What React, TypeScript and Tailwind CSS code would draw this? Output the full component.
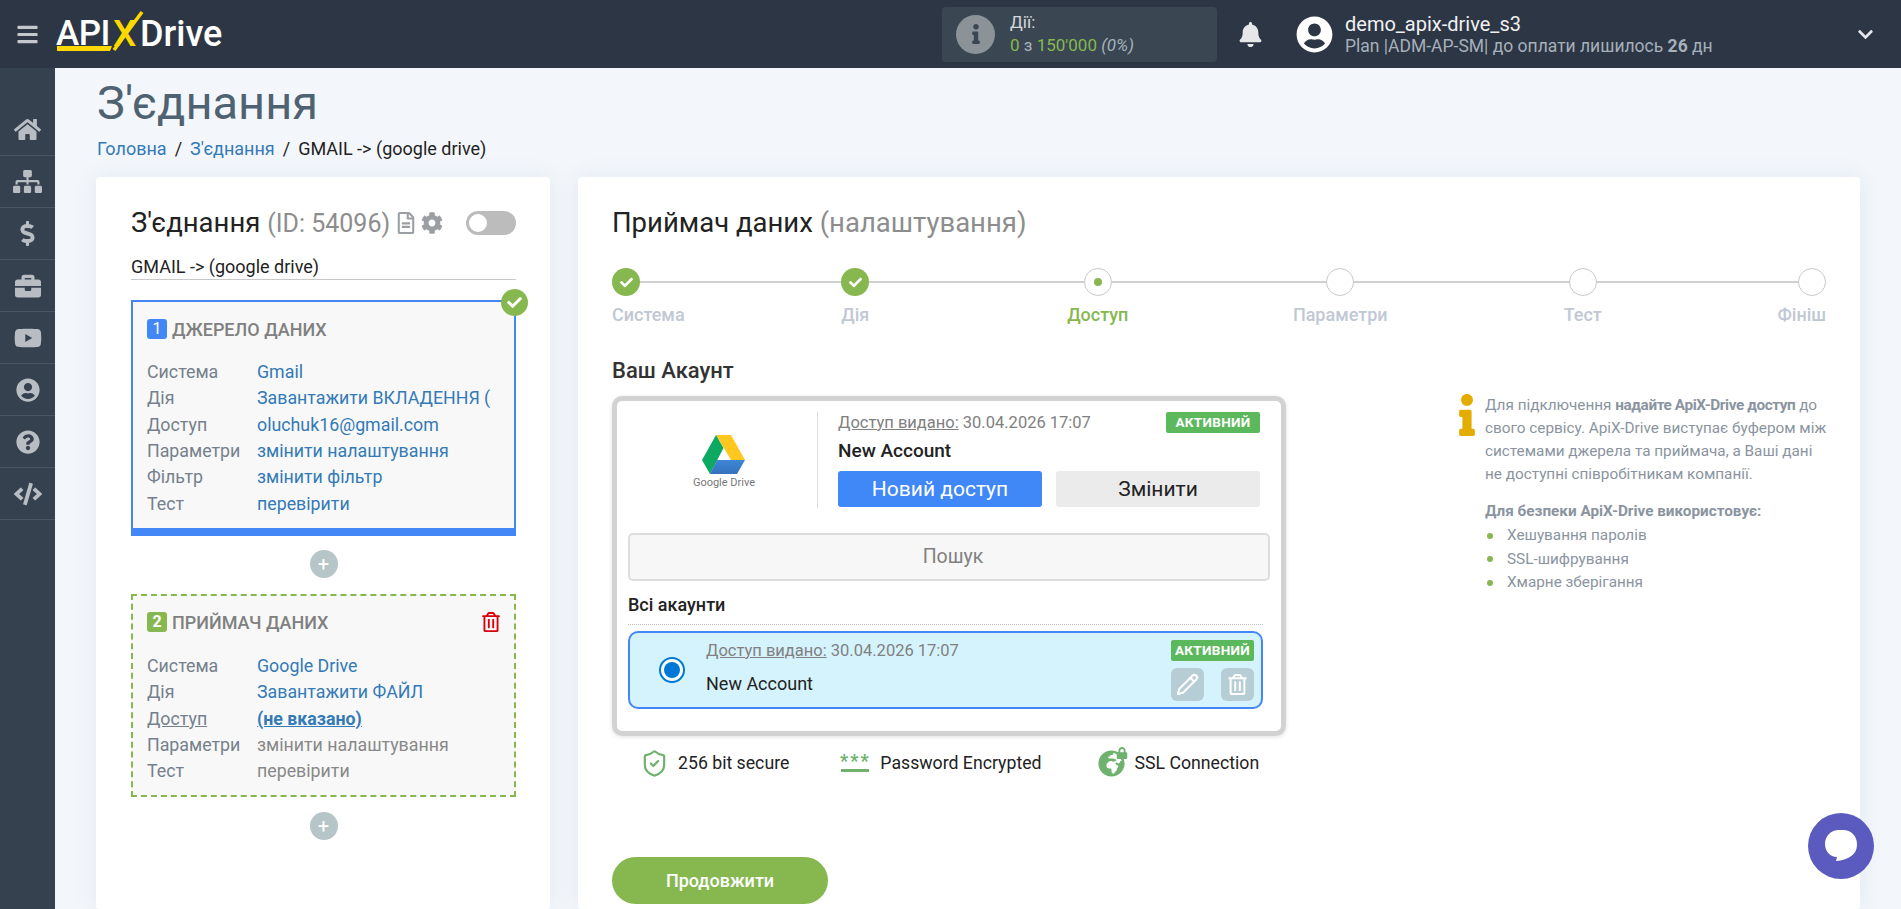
import { Pencil, ShieldCheck } from 'lucide-react';
import {
  FaBars, FaBell, FaBriefcase, FaCheck, FaChevronDown, FaCode, FaCog, FaDollarSign, FaGlobeAfrica, FaHome,
  FaInfo, FaLock, FaQuestionCircle, FaRegFileAlt, FaRegTrashAlt, FaSitemap, FaUserCircle, FaYoutube,
} from 'react-icons/fa';

const sideIcons = [
  { Icon: FaHome, size: 27 },
  { Icon: FaSitemap, size: 29 },
  { Icon: FaDollarSign, size: 25 },
  { Icon: FaBriefcase, size: 26 },
  { Icon: FaYoutube, size: 28 },
  { Icon: FaUserCircle, size: 24 },
  { Icon: FaQuestionCircle, size: 24 },
  { Icon: FaCode, size: 28 },
];

const steps = [
  { label: 'Система', state: 'done', align: 'items-start' },
  { label: 'Дія', state: 'done', align: 'items-center' },
  { label: 'Доступ', state: 'current', align: 'items-center' },
  { label: 'Параметри', state: 'todo', align: 'items-center' },
  { label: 'Тест', state: 'todo', align: 'items-center' },
  { label: 'Фініш', state: 'todo', align: 'items-end' },
];

function Logo() {
  return (
    <div className="relative ml-[20px] w-[170px] h-[68px] text-white">
      <span className="absolute left-0 top-[15px] text-[35px] leading-[38px] font-medium tracking-[-0.5px]">API</span>
      <span className="absolute left-[57px] top-[15px] text-[37px] leading-[38px] font-medium text-[#ffd800]">X</span>
      <span className="absolute left-[84px] top-[15px] text-[36px] leading-[38px] font-medium">Drive</span>
      <svg className="absolute left-0 top-0" width="100" height="68" viewBox="0 0 100 68">
        <path d="M1 46h55l-2 5H1z" fill="#ffd800" />
        <path d="M86 12 58 50" stroke="#ffd800" strokeWidth="3.5" fill="none" />
      </svg>
    </div>
  );
}

function Header() {
  return (
    <header className="h-[68px] shrink-0 bg-[#2d3644] flex items-center text-white">
      <div className="w-[36px] pl-[16px] shrink-0">
        <FaBars className="text-[#c4c7cb]" size={23} />
      </div>
      <Logo />
      <div className="ml-[716px] w-[275px] h-[55px] rounded-[4px] bg-[#3a4753] flex items-center pl-[14px]">
        <div className="w-[39px] h-[39px] rounded-full bg-[#8b9298] flex items-center justify-center">
          <FaInfo className="text-[#3a4753]" size={20} />
        </div>
        <div className="ml-[15px] pb-[2px]">
          <div className="text-[17px] leading-[20px] text-[#d5d8db]">Дії:</div>
          <div className="mt-[3px] text-[17px] leading-[20px] text-[#86b84f]">
            0 <span className="text-[#a6b0bb]">з</span> 150'000 <span className="italic text-[#a6b0bb]">(0%)</span>
          </div>
        </div>
      </div>
      <FaBell className="ml-[21px] text-[#e5e7e9]" size={25} />
      <FaUserCircle className="ml-[33px] text-white" size={37} />
      <div className="ml-[12px]">
        <div className="text-[20px] leading-[22px] text-[#f0f1f2]">demo_apix-drive_s3</div>
        <div className="mt-[1px] text-[17.5px] leading-[20px] text-[#a6b0bb]">
          Plan |ADM-AP-SM| до оплати лишилось <b className="font-bold">26</b> дн
        </div>
      </div>
      <FaChevronDown className="ml-auto mr-[27px] text-[#e5e7e9]" size={17} />
    </header>
  );
}

function Sidebar() {
  return (
    <aside className="w-[55px] shrink-0 bg-[#36414f] pt-[36px]">
      {sideIcons.map(({ Icon, size }, i) => (
        <div key={i} className="h-[52px] flex items-center justify-center border-b border-[#4a5563] text-[#b8bdc3]">
          <Icon size={size} />
        </div>
      ))}
    </aside>
  );
}

function Row({ label, value, tone = 'link', labelClass = '' }: { label: string; value: string; tone?: string; labelClass?: string }) {
  let valueClass = 'text-[#337ab7]';
  if (tone === 'muted') valueClass = 'text-[#888888]';
  if (tone === 'strong') valueClass = 'text-[#337ab7] font-bold underline';
  return (
    <div className="flex h-[26.3px] items-center text-[17.8px] leading-[26px]">
      <div className={`w-[110px] shrink-0 text-[#75808c] ${labelClass}`}>{label}</div>
      <div className={`w-[240px] whitespace-nowrap ${valueClass}`}>{value}</div>
    </div>
  );
}

function PlusButton({ className }: { className: string }) {
  return (
    <div className={`w-[28px] h-[28px] rounded-full bg-[#b6c5c7] mx-auto flex items-center justify-center text-white text-[20px] leading-none ${className}`}>+</div>
  );
}

function LeftCard() {
  return (
    <section className="w-[454px] shrink-0 bg-white rounded-[4px] shadow-[0_0_25px_rgba(40,60,90,0.08)] pl-[35px] pr-[34px] pt-[30px]">
      <div className="flex items-center h-[32px]">
        <h2 className="text-[27.5px] leading-[32px] text-[#222] whitespace-nowrap">
          З'єднання <span className="text-[25px] text-[#8d8d8d]">(ID: 54096)</span>
        </h2>
        <FaRegFileAlt className="ml-[5px] text-[#9b9fa3]" size={22} />
        <FaCog className="ml-[4px] text-[#9b9fa3]" size={22} />
        <div className="ml-auto w-[50px] h-[24px] rounded-full bg-[#bcbcbc] p-[3px]">
          <div className="w-[18px] h-[18px] rounded-full bg-white" />
        </div>
      </div>
      <div className="mt-[16px] h-[25px] border-b border-[#c9c9c9] text-[18px] leading-[24px] text-[#222]">GMAIL -&gt; (google drive)</div>

      <div className="relative mt-[20px] h-[236px] bg-[#f8f8f8] border-2 border-b-[8px] border-[#4287f5] pl-[14px] pt-[17px]">
        <div className="absolute -right-[2px] -top-[13px] translate-x-[12px] w-[27px] h-[27px] rounded-full bg-[#86b84f] flex items-center justify-center">
          <FaCheck className="text-white" size={15} />
        </div>
        <div className="flex items-center h-[20px]">
          <span className="w-[20px] h-[20px] rounded-[3px] bg-[#4287f5] text-white text-[16px] leading-[20px] text-center">1</span>
          <span className="ml-[5px] text-[18px] font-medium text-[#808080]">ДЖЕРЕЛО ДАНИХ</span>
        </div>
        <div className="mt-[20px]">
          <Row label="Система" value="Gmail" />
          <Row label="Дія" value="Завантажити ВКЛАДЕННЯ (" />
          <Row label="Доступ" value="oluchuk16@gmail.com" />
          <Row label="Параметри" value="змінити налаштування" />
          <Row label="Фільтр" value="змінити фільтр" />
          <Row label="Тест" value="перевірити" />
        </div>
      </div>
      <PlusButton className="mt-[14px]" />

      <div className="mt-[16px] h-[203px] bg-[#f8f8f8] border-2 border-dashed border-[#86b84f] pl-[14px] pt-[16px]">
        <div className="flex items-center h-[20px]">
          <span className="w-[20px] h-[20px] rounded-[3px] bg-[#86b84f] text-white text-[16px] font-bold leading-[20px] text-center">2</span>
          <span className="ml-[5px] text-[18px] font-medium text-[#808080]">ПРИЙМАЧ ДАНИХ</span>
          <FaRegTrashAlt className="ml-auto mr-[13px] text-[#d9000d]" size={20} />
        </div>
        <div className="mt-[21px]">
          <Row label="Система" value="Google Drive" />
          <Row label="Дія" value="Завантажити ФАЙЛ" />
          <Row label="Доступ" value="(не вказано)" tone="strong" labelClass="underline" />
          <Row label="Параметри" value="змінити налаштування" tone="muted" />
          <Row label="Тест" value="перевірити" tone="muted" />
        </div>
      </div>
      <PlusButton className="mt-[15px]" />
    </section>
  );
}

function Stepper() {
  return (
    <div className="relative mt-[28px] w-[1214px] h-[60px] grid grid-cols-[122px_242.5px_242.5px_242.5px_242.5px_122px]">
      <div className="absolute left-[14px] right-[14px] top-[13px] h-[2px] bg-[#d0d0d0]" />
      {steps.map((s) => (
        <div key={s.label} className={`relative flex flex-col ${s.align}`}>
          {s.state === 'done' ? (
            <div className="w-[28px] h-[28px] rounded-full bg-[#86b84f] flex items-center justify-center">
              <FaCheck className="text-white" size={13} />
            </div>
          ) : (
            <div className="w-[28px] h-[28px] rounded-full bg-white border border-[#c9c9c9] flex items-center justify-center">
              {s.state === 'current' && <div className="w-[8px] h-[8px] rounded-full bg-[#86b84f]" />}
            </div>
          )}
          <div className={`mt-[8px] text-[18px] leading-[22px] font-medium ${s.state === 'current' ? 'text-[#86b84f]' : 'text-[#bfc8d4]'}`}>{s.label}</div>
        </div>
      ))}
    </div>
  );
}

function DriveLogo() {
  return (
    <div className="flex flex-col items-center">
      <svg width="43" height="39" viewBox="0 0 43 39">
        <defs>
          <linearGradient id="driveBlue" x1="0" y1="0" x2="0" y2="1">
            <stop offset="0" stopColor="#3f86d6" />
            <stop offset="1" stopColor="#3471bd" />
          </linearGradient>
        </defs>
        <path d="M14 0 29 0 43 25 29 25Z" fill="#ffc720" />
        <path d="M14 0 21.5 13 8 39 0 25Z" fill="#0da960" />
        <path d="M15 25H43L35 39H8Z" fill="url(#driveBlue)" />
      </svg>
      <div className="mt-[2px] text-[11px] leading-[14px] text-[#777]">Google Drive</div>
    </div>
  );
}

function ActiveBadge({ className }: { className: string }) {
  return (
    <div className={`h-[21px] rounded-[2px] bg-[#5cb85c] text-white text-[13.5px] leading-[20px] font-bold text-center tracking-[0.3px] ${className}`}>АКТИВНИЙ</div>
  );
}

function AccountBox() {
  return (
    <div className="mt-[11px] w-[674px] h-[340px] rounded-[10px] border-[5px] border-[#d2d2d2] shadow-[0_1px_4px_rgba(0,0,0,0.12)]">
      <div className="flex mt-[11px]">
        <div className="w-[201px] h-[96px] border-r border-[#dcdcdc] flex items-center justify-center pl-[14px] pt-[4px]">
          <DriveLogo />
        </div>
        <div className="pl-[20px] w-[442px]">
          <div className="flex items-start justify-between h-[21px]">
            <div className="text-[16.5px] leading-[22px] text-[#808080]">
              <span className="underline">Доступ видано:</span> 30.04.2026 17:07
            </div>
            <ActiveBadge className="w-[94px]" />
          </div>
          <div className="mt-[6px] text-[19px] leading-[24px] font-medium text-[#222]">New Account</div>
          <div className="mt-[8px] flex gap-[14px]">
            <div className="w-[204px] h-[36px] rounded-[3px] bg-[#4087f7] text-white text-[21px] leading-[36px] text-center">Новий доступ</div>
            <div className="w-[204px] h-[36px] rounded-[3px] bg-[#ebebeb] text-[#222] text-[21px] leading-[36px] text-center">Змінити</div>
          </div>
        </div>
      </div>
      <div className="mt-[25px] mx-[11px] h-[48px] pl-[8px] rounded-[5px] border-2 border-[#dddddd] bg-[#f7f7f7] text-[19.5px] leading-[44px] text-center text-[#808080]">Пошук</div>
      <div className="mt-[13px] ml-[11px] text-[18px] leading-[22px] font-medium text-[#222]">Всі акаунти</div>
      <div className="mt-[8px] ml-[11px] mr-[18px] border-t border-dotted border-[#bdbdbd]" />
      <div className="mt-[6px] ml-[11px] mr-[18px] h-[78px] rounded-[10px] border-2 border-[#4287f5] bg-[#d5f3fd] flex">
        <div className="w-[76px] shrink-0 flex items-center justify-center pl-[7px]">
          <div className="w-[26px] h-[26px] rounded-full bg-white border-2 border-[#0078d7] flex items-center justify-center">
            <div className="w-[16px] h-[16px] rounded-full bg-[#0078d7]" />
          </div>
        </div>
        <div className="pt-[7px]">
          <div className="text-[16.5px] leading-[22px] text-[#808080]">
            <span className="underline">Доступ видано:</span> 30.04.2026 17:07
          </div>
          <div className="mt-[11px] text-[18px] leading-[22px] text-[#222]">New Account</div>
        </div>
        <div className="ml-auto mr-[7px] mt-[7px] w-[83px]">
          <ActiveBadge className="w-[83px]" />
          <div className="mt-[7px] flex justify-between">
            <div className="w-[33px] h-[33px] rounded-[6px] bg-[#b7cdd6] flex items-center justify-center">
              <Pencil className="text-white" size={23} strokeWidth={2.2} />
            </div>
            <div className="w-[33px] h-[33px] rounded-[6px] bg-[#b7cdd6] flex items-center justify-center">
              <FaRegTrashAlt className="text-white" size={21} />
            </div>
          </div>
        </div>
      </div>
    </div>
  );
}

function SecurityRow() {
  return (
    <div className="mt-[12px] w-[674px] h-[30px] flex items-center text-[17.7px] leading-[22px] text-[#222] whitespace-nowrap">
      <ShieldCheck className="ml-[28px] text-[#6eb26e]" size={29} strokeWidth={1.8} />
      <span className="ml-[9px]">256 bit secure</span>
      <div className="ml-[50px] w-[32px] flex flex-col items-center">
        <span className="text-[#6eb26e] text-[18px] leading-[12px] font-bold tracking-[2px] h-[14px]">***</span>
        <div className="w-[28px] h-[3px] bg-[#6eb26e]" />
      </div>
      <span className="ml-[9px]">Password Encrypted</span>
      <div className="relative ml-[56px] w-[29px] h-[28px]">
        <FaGlobeAfrica className="absolute left-0 bottom-0 text-[#6eb26e]" size={27} />
        <FaLock className="absolute -right-[1px] -top-[2px] text-[#6eb26e]" size={12} />
      </div>
      <span className="ml-[8px]">SSL Connection</span>
    </div>
  );
}

function InfoPanel() {
  return (
    <div className="ml-[168px] mt-[188px] w-[366px] h-[200px] flex text-[15.3px] leading-[23px] text-[#8a94a0]">
      <div className="w-[28px] shrink-0">
        <FaInfo className="text-[#e5ac00] -ml-[11px]" size={42} />
      </div>
      <div className="w-[345px] whitespace-nowrap">
        <p>
          Для підключення <b className="font-bold tracking-[-0.4px]">надайте ApiX-Drive доступ</b> до<br />
          свого сервісу. ApiX-Drive виступає буфером між<br />
          системами джерела та приймача, а Ваші дані<br />
          не доступні співробітникам компанії.
        </p>
        <p className="mt-[14px] font-bold">Для безпеки ApiX-Drive використовує:</p>
        <ul className="mt-[1px]">
          {['Хешування паролів', 'SSL-шифрування', 'Хмарне зберігання'].map((t) => (
            <li key={t} className="flex items-center h-[23.5px]">
              <span className="w-[6px] h-[6px] ml-[2px] rounded-full bg-[#86b84f]" />
              <span className="ml-[14px]">{t}</span>
            </li>
          ))}
        </ul>
      </div>
    </div>
  );
}

function RightCard() {
  return (
    <section className="w-[1282px] shrink-0 bg-white rounded-[4px] shadow-[0_0_25px_rgba(40,60,90,0.08)] pl-[34px] pt-[29px] flex">
      <div className="w-[677px] shrink-0">
        <h2 className="text-[27.5px] leading-[34px] text-[#222] whitespace-nowrap">
          Приймач даних <span className="text-[#8d8d8d]">(налаштування)</span>
        </h2>
        <Stepper />
        <h3 className="mt-[29px] text-[22px] leading-[28px] font-medium text-[#333]">Ваш Акаунт</h3>
        <AccountBox />
        <SecurityRow />
        <div className="mt-[79px] w-[216px] h-[47px] rounded-full bg-[#86b84f] text-white text-[18px] font-medium leading-[47px] text-center">Продовжити</div>
      </div>
      <InfoPanel />
    </section>
  );
}

function ChatBubble() {
  return (
    <div className="absolute left-[1808px] top-[813px] w-[66px] h-[66px] rounded-full bg-[#5b5bbf] flex items-center justify-center">
      <svg width="34" height="34" viewBox="0 0 34 34">
        <path d="M15 1h4C27 1 33 7 33 15c0 7-3 11-9 14-4 2-9 3-12 3l1-4C6 28 1 22 1 15 1 7 7 1 15 1Z" fill="#fff" />
      </svg>
    </div>
  );
}

export default function App() {
  return (
    <div className="relative w-[1901px] h-[909px] overflow-hidden flex flex-col bg-[#f3f7fc] [font-family:Roboto,sans-serif]">
      <Header />
      <div className="flex flex-1 min-h-0">
        <Sidebar />
        <main className="flex-1 min-w-0 pl-[41px] flex flex-col">
          <h1 className="ml-[1px] mt-[10px] text-[47px] leading-[50px] text-[#4f6272]">З'єднання</h1>
          <nav className="ml-[1px] mt-[9px] text-[18px] leading-[24px] text-[#222]">
            <span className="text-[#337ab7]">Головна</span>
            <span className="mx-[8px]">/</span>
            <span className="text-[#337ab7]">З'єднання</span>
            <span className="mx-[8px]">/</span>
            GMAIL -&gt; (google drive)
          </nav>
          <div className="mt-[16px] flex flex-1 min-h-0 gap-[28px]">
            <LeftCard />
            <RightCard />
          </div>
        </main>
      </div>
      <ChatBubble />
    </div>
  );
}
